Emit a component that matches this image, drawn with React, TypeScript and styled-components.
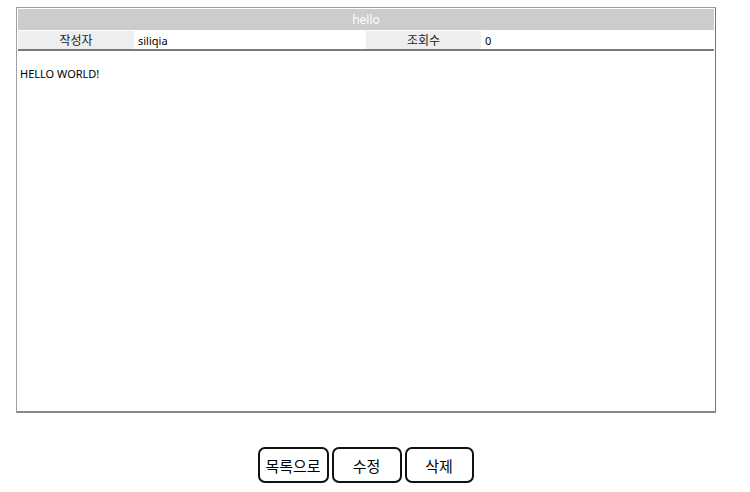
import styled, { createGlobalStyle } from 'styled-components';

const GlobalStyle = createGlobalStyle`
  body {
    margin: 0;
    background: #fff;
    font-family: "Noto Sans", "Noto Sans CJK KR", sans-serif;
    color: #000;
  }
`;

const Page = styled.div`
  width: 750px;
  padding-top: 7px;
  display: flex;
  flex-direction: column;
  align-items: center;
`;

const Board = styled.div`
  width: 696px;
  height: 401px;
  border: 1px solid #a0a0a0;
  border-right-color: #777;
  border-bottom: 2px solid #888;
  padding: 1px;
  display: flex;
  flex-direction: column;
  margin-left: -18px;
`;

const Title = styled.div`
  height: 21px;
  background: #cccccc;
  color: #fff;
  font-size: 12px;
  display: flex;
  align-items: center;
  justify-content: center;
`;

const InfoRow = styled.div`
  height: 18px;
  margin-top: 1px;
  display: grid;
  grid-template-columns: 116px 232px 115px 1fr;
  border-bottom: 2px solid #7a7a7a;
  font-size: 12px;
`;

const Label = styled.div`
  background: #eeeeee;
  display: flex;
  align-items: center;
  justify-content: center;
  color: #222;
`;

const Value = styled.div`
  display: flex;
  align-items: center;
  padding-left: 4px;
  font-size: 11px;
`;

const Content = styled.div`
  flex: 1;
  padding: 14px 2px;
  font-size: 11px;
  line-height: 18px;
`;

const Actions = styled.div`
  margin-top: 34px;
  display: flex;
  gap: 3px;
  margin-left: -19px;
`;

const Button = styled.button<{ $w: number }>`
  width: ${({ $w }) => $w}px;
  height: 36px;
  border: 2px solid #111;
  border-radius: 7px;
  background: #fff;
  font-family: "Noto Sans CJK KR", sans-serif;
  font-size: 15px;
  color: #000;
  padding: 0;
  cursor: pointer;
`;

export default function App() {
  return (
    <>
      <GlobalStyle />
      <Page>
        <Board>
          <Title>hello</Title>
          <InfoRow>
            <Label>작성자</Label>
            <Value>siliqia</Value>
            <Label>조회수</Label>
            <Value>0</Value>
          </InfoRow>
          <Content>HELLO WORLD!</Content>
        </Board>
        <Actions>
          <Button $w={71}>목록으로</Button>
          <Button $w={70}>수정</Button>
          <Button $w={69}>삭제</Button>
        </Actions>
      </Page>
    </>
  );
}
